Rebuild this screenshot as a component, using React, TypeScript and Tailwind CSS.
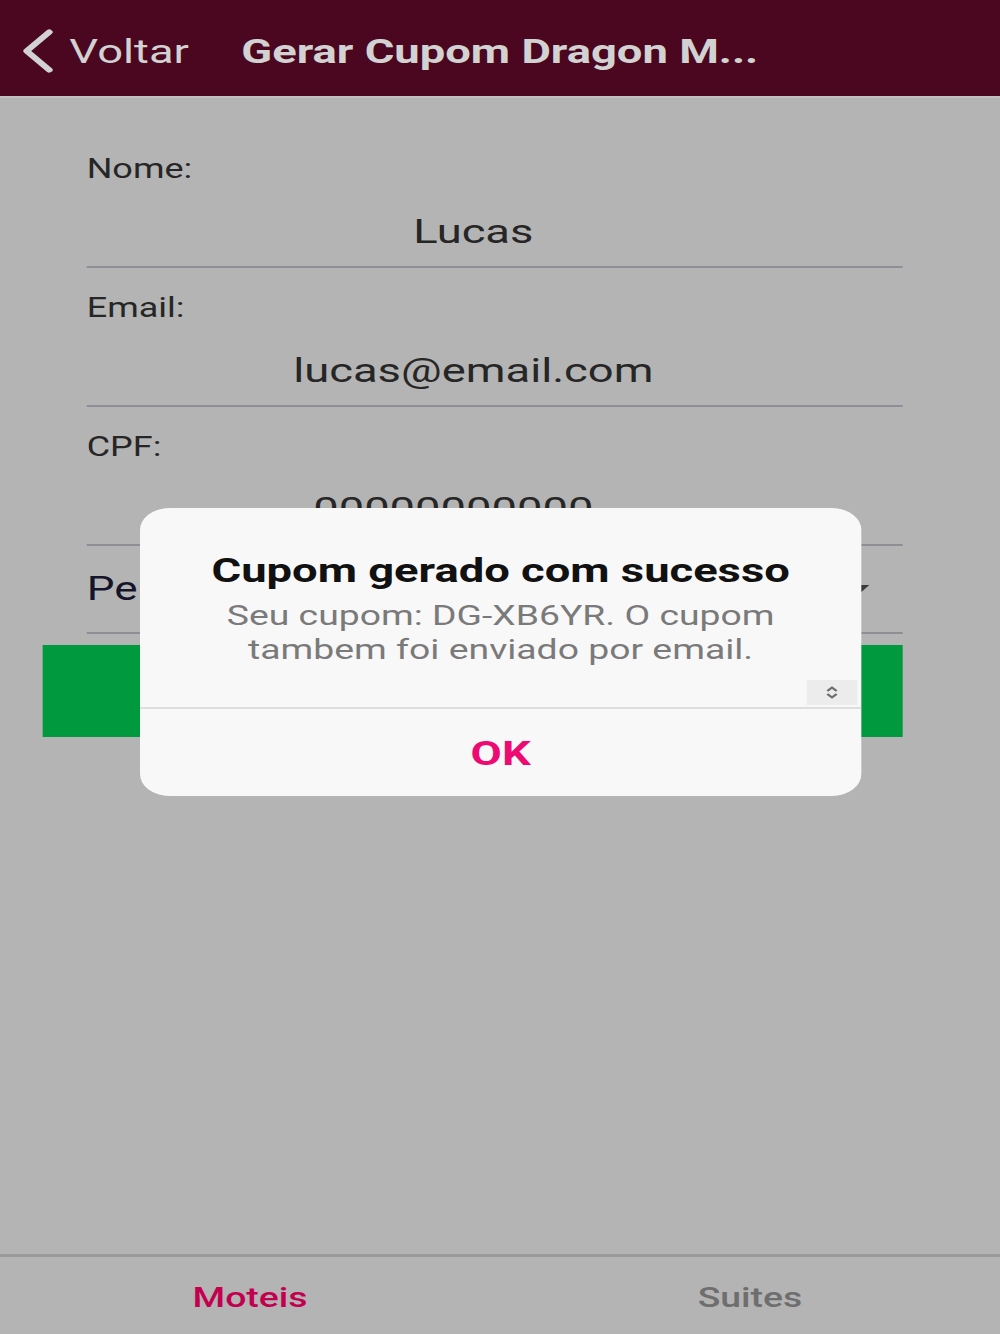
import React from "react";

function Row({ label, value, padRight }: { label: string; value: string; padRight: string }) {
  return (
    <div className="ml-[65px] w-[612px] h-[139px] border-b-2 border-[#8e8e96] flex flex-col">
      <div className="pt-[26px] text-[27px] leading-[28px] text-[#262626]">{label}</div>
      <div className={"mt-[28px] text-center text-[34px] leading-[40px] text-[#262626] " + padRight}>{value}</div>
    </div>
  );
}

export default function App() {
  return (
    <div className="relative w-[1000px] h-[1334px] overflow-hidden bg-[#b4b4b4] font-['Roboto',sans-serif]">
      <div className="relative w-[750px] h-[1334px] origin-top-left scale-x-[1.33333] flex flex-col">
        {/* Header */}
        <div className="h-[98px] shrink-0 bg-[#4b0720] flex items-center pt-[5px] border-b-2 border-[#c2c2c2]">
          <div className="w-[181px] shrink-0 pl-[15px] flex items-center">
            <svg width="26" height="44" viewBox="0 0 26 44" className="shrink-0">
              <polyline
                points="22,3 5,22 22,41"
                fill="none"
                stroke="#d2d2d2"
                strokeWidth="5"
                strokeLinecap="round"
                strokeLinejoin="round"
              />
            </svg>
            <span className="ml-[11px] text-[34px] leading-[40px] text-[#d2d2d2]">Voltar</span>
          </div>
          <div className="text-[34px] leading-[40px] font-bold text-[#d2d2d2] whitespace-nowrap">
            Gerar Cupom Dragon M...
          </div>
        </div>

        {/* Form */}
        <div className="pt-[31px] flex flex-col">
          <Row label="Nome:" value="Lucas" padRight="pr-[32px]" />
          <Row label="Email:" value="lucas@email.com" padRight="pr-[32px]" />
          <Row label="CPF:" value="00000000000" padRight="pr-[62px]" />
          <div className="ml-[65px] w-[612px] h-[88px] border-b-2 border-[#8e8e96] flex items-center justify-between">
            <span className="text-[33px] leading-[40px] text-[#14142a]">Pe</span>
            <svg width="12" height="8" viewBox="0 0 12 8" className="mr-[25px]">
              <polygon points="0,0 12,0 6,7" fill="#3a3a3a" />
            </svg>
          </div>
          <div className="mt-[11px] ml-[32px] w-[645px] h-[92px] bg-[#00993d] flex items-center justify-center">
            <span className="text-[32px] text-[#b4e6c4]">Gerar Cupom</span>
          </div>
        </div>

        <div className="flex-1" />

        {/* Tab bar */}
        <div className="h-[80px] shrink-0 border-t-[3px] border-[#9a9a9a] grid grid-cols-2 items-center">
          <div className="text-center pt-[4px] text-[28px] leading-[32px] font-medium text-[#c2004f]">Moteis</div>
          <div className="text-center pt-[4px] text-[28px] leading-[32px] font-medium text-[#6e6e6e]">Suites</div>
        </div>

        {/* Alert */}
        <div className="absolute top-[508px] left-[105px] w-[541px] h-[288px] rounded-[22px] bg-[#f8f8f8] flex flex-col overflow-hidden">
          <div className="h-[199px] flex flex-col">
            <div className="pt-[42px] text-center text-[34px] leading-[40px] font-bold text-[#111111]">
              Cupom gerado com sucesso
            </div>
            <div className="mt-[9px] text-center text-[28px] leading-[34px] text-[#7a7a7a]">
              Seu cupom: DG-XB6YR. O cupom
              <br />
              tambem foi enviado por email.
            </div>
            <div className="mt-[13px] flex justify-end">
              <div className="mr-[3px] w-[38px] h-[25px] bg-[#ececec] flex items-center justify-center">
                <svg width="10" height="15" viewBox="0 0 10 15">
                  <polyline points="1.5,6 5,2.5 8.5,6" fill="none" stroke="#6e6e6e" strokeWidth="1.8" />
                  <polyline points="1.5,9 5,12.5 8.5,9" fill="none" stroke="#6e6e6e" strokeWidth="1.8" />
                </svg>
              </div>
            </div>
          </div>
          <div className="border-t-2 border-[#dedede] flex-1 flex items-center justify-center">
            <span className="text-[34px] leading-[40px] font-bold text-[#ee0a73]">OK</span>
          </div>
        </div>
      </div>
    </div>
  );
}
